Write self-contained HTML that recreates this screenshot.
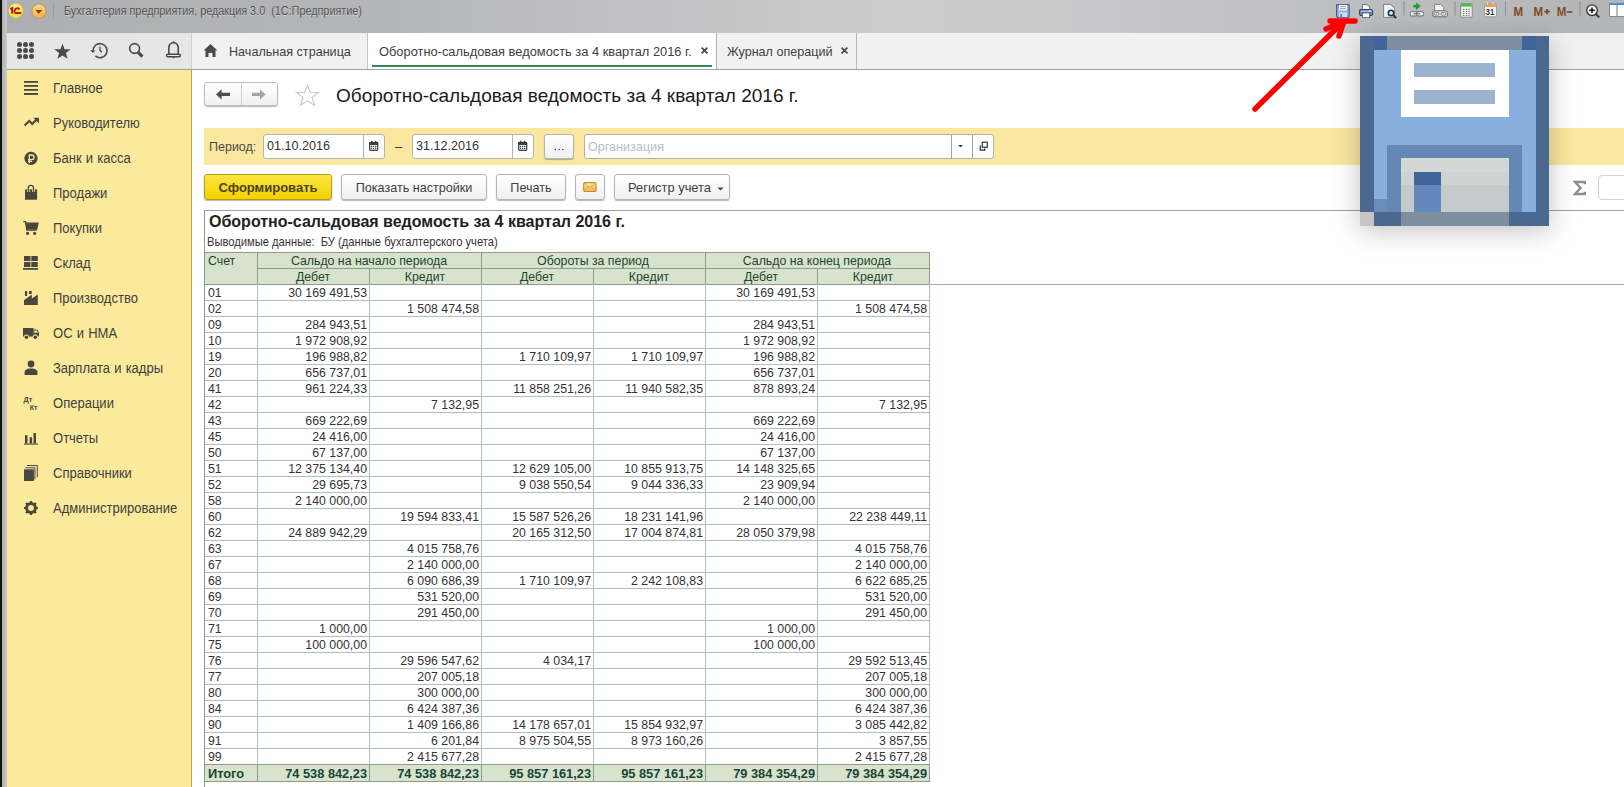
<!DOCTYPE html>
<html><head><meta charset="utf-8">
<style>
*{margin:0;padding:0;box-sizing:border-box}
html,body{width:1624px;height:787px;overflow:hidden;background:#fff;font-family:"Liberation Sans",sans-serif;color:#333}
.a{position:absolute}
svg{position:absolute;overflow:visible}
#titlebar{left:7px;top:0;width:1617px;height:33px;background:linear-gradient(90deg,#adaeb0 0%,#b6b7b9 25%,#cdcdce 55%,#c8c8ca 68%,#bdbec0 82%,#b4b5b7 100%)}
.sb{position:absolute;left:53px;font-size:14px;line-height:16px;color:#404040;word-spacing:.6px;white-space:nowrap;transform:scaleX(.93);transform-origin:0 0}
.tab{position:absolute;top:34px;height:36px;line-height:36px;font-size:12.6px;color:#404040;white-space:nowrap}
.btn{position:absolute;border:1px solid #b4b4b4;border-radius:3px;background:linear-gradient(#ffffff,#f0f0f0);box-shadow:0 1px 1px rgba(0,0,0,.28);font-size:12.6px;color:#404040;text-align:center;white-space:nowrap;line-height:23px}
.inp{position:absolute;background:#fff;border:1px solid #b4b4b4;border-radius:3px;font-size:12.6px;color:#333;line-height:23px;padding-left:3px;white-space:nowrap}
.th{position:absolute;font-size:13.4px;line-height:16px;color:#1e4436;white-space:nowrap;transform:scaleX(.92);transform-origin:50% 0}
.td{position:absolute;font-size:13.4px;line-height:16px;color:#333;white-space:nowrap;transform:scaleX(.92);transform-origin:100% 0}
.tt{position:absolute;font-size:13.4px;line-height:17px;color:#174636;font-weight:bold;white-space:nowrap;transform:scaleX(.955);transform-origin:100% 0}
.lft{transform-origin:0 0}
.ti{fill:#4a4a4a}
</style></head><body>
<!-- left window edge -->
<div class="a" style="left:0;top:0;width:2px;height:787px;background:#121212"></div>
<div class="a" style="left:2px;top:0;width:5px;height:787px;background:linear-gradient(90deg,#b0b0b0,#cacaca)"></div>

<!-- title bar -->
<div id="titlebar" class="a"></div>
<svg style="left:0;top:0" width="60" height="30">
  <defs>
   <radialGradient id="g1" cx="40%" cy="35%" r="70%"><stop offset="0" stop-color="#fff6a0"/><stop offset=".6" stop-color="#f8e84a"/><stop offset="1" stop-color="#eed820"/></radialGradient>
   <linearGradient id="g2" x1="0" y1="0" x2="0" y2="1"><stop offset="0" stop-color="#fcd78e"/><stop offset="1" stop-color="#f8b048"/></linearGradient>
  </defs>
  <circle cx="15.9" cy="10.9" r="7.3" fill="url(#g1)"/>
  <path d="M10.3 9.2 L12.2 8.1 V13.8" fill="none" stroke="#c4180e" stroke-width="2"/>
  <path d="M19.6 9.3 A3 2.8 0 0 0 14.6 12.2 M14.4 13 H21.3" fill="none" stroke="#c4180e" stroke-width="1.9"/>
  <circle cx="39" cy="11.1" r="7.1" fill="url(#g2)" stroke="#c59445" stroke-width=".9"/>
  <path d="M35.4 10.1 H42.3 L38.8 13.8Z" fill="#6a4412"/>
</svg>
<div class="a" style="left:53px;top:2px;width:1px;height:16px;background:#9e9e9e"></div>
<div class="a" style="left:64px;top:4px;font-size:12.3px;line-height:14px;color:#555;white-space:nowrap;transform:scaleX(.88);transform-origin:0 0;text-shadow:0 1px 0 rgba(255,255,255,.35)">Бухгалтерия предприятия, редакция 3.0&nbsp; (1С:Предприятие)</div>

<!-- title bar right icons -->
<svg style="left:1330px;top:0" width="294" height="22">
  <!-- floppy -->
  <rect x="6.6" y="4.6" width="12.6" height="12.6" rx=".8" fill="#90b2e2" stroke="#3d5d8c" stroke-width="1.1"/>
  <rect x="9" y="4.9" width="8" height="5.4" fill="#f6f8fb"/>
  <rect x="10" y="6.2" width="6" height=".9" fill="#8ea4c2"/><rect x="10" y="8.1" width="6" height=".9" fill="#8ea4c2"/>
  <rect x="9" y="12.4" width="8" height="4.6" fill="#d6dbe0"/><rect x="10.4" y="14" width="1.4" height="3" fill="#4a6a98"/>
  <!-- printer -->
  <path d="M32.4 4.6 H37.2 L39.6 7 V10.5 H32.4Z" fill="#f4f6f8" stroke="#4a4a4a" stroke-width=".7"/>
  <rect x="29.6" y="9.5" width="13" height="6" rx="1.6" fill="#6e8db8" stroke="#2c4466" stroke-width="1.1"/>
  <rect x="30.8" y="10.6" width="10.6" height="1.2" fill="#a9c0de"/>
  <rect x="38.6" y="10.4" width="1.1" height="1" fill="#fff"/><rect x="40.2" y="10.4" width="1.1" height="1" fill="#fff"/>
  <rect x="32.4" y="13" width="7.3" height="4.6" fill="#fff" stroke="#4a4a4a" stroke-width=".7"/>
  <!-- preview -->
  <path d="M53.6 4.4 H60.6 L64.3 8.2 V17.4 H53.6Z" fill="#f2f4f6" stroke="#6a6a6a" stroke-width=".8"/>
  <circle cx="61" cy="12.9" r="2.7" fill="#cfe6f8" stroke="#17384e" stroke-width="1.6"/>
  <path d="M63 15 L66.2 18" stroke="#17384e" stroke-width="2.1"/>
  <rect x="73.5" y="1" width="1" height="14.5" fill="#8e8e8e"/>
  <!-- link arrow -->
  <path d="M83.2 6.2 H88 M86 3.6 L89 6.2 L86 8.8" stroke="#2a9c2a" stroke-width="2.2" fill="none"/>
  <rect x="80.2" y="11.6" width="7.2" height="4.4" rx="1.6" fill="#ececec" stroke="#6a6a6a" stroke-width="1"/>
  <rect x="86.4" y="11.6" width="7.2" height="4.4" rx="1.6" fill="#ececec" stroke="#6a6a6a" stroke-width="1"/>
  <rect x="83.6" y="13.2" width="6.4" height="1.2" fill="#6a6a6a"/>
  <!-- print link -->
  <path d="M104.6 4.4 H110.6 L113.6 7.4 V11 H104.6Z" fill="#f3f3f3" stroke="#707070" stroke-width=".8"/>
  <rect x="102.8" y="10.8" width="14.6" height="6" rx="2" fill="#e8e8e8" stroke="#6a6a6a" stroke-width="1"/>
  <rect x="104.2" y="12.6" width="5" height="2.4" rx="1" fill="none" stroke="#6a6a6a" stroke-width=".8"/>
  <rect x="110.8" y="12.6" width="5" height="2.4" rx="1" fill="none" stroke="#6a6a6a" stroke-width=".8"/>
  <rect x="124.5" y="1" width="1" height="14.5" fill="#8e8e8e"/>
  <!-- green calendar -->
  <rect x="130.6" y="3.6" width="11.6" height="13.6" rx="1" fill="#eef0ee" stroke="#7a7a7a" stroke-width=".8"/>
  <rect x="131" y="3.6" width="10.8" height="3" fill="#48c048"/>
  <g fill="#4a4a4a"><circle cx="133.8" cy="9.3" r=".6"/><circle cx="136.4" cy="9.3" r=".6"/><circle cx="139" cy="9.3" r=".6"/><circle cx="133.8" cy="11.3" r=".6"/><circle cx="136.4" cy="11.3" r=".6"/><circle cx="139" cy="11.3" r=".6"/><circle cx="133.8" cy="13.3" r=".6"/><circle cx="136.4" cy="13.3" r=".6"/><circle cx="139" cy="13.3" r=".6"/><circle cx="133.8" cy="15.3" r=".6"/><circle cx="136.4" cy="15.3" r=".6"/><circle cx="139" cy="15.3" r=".6"/></g>
  <!-- orange calendar -->
  <rect x="154.6" y="3.6" width="11.8" height="13.2" rx="1.2" fill="#f5f5f5" stroke="#8a8a8a" stroke-width=".8"/>
  <rect x="155" y="3.4" width="11" height="3.6" rx="1" fill="#e3a05a"/>
  <rect x="157.2" y="2.6" width=".9" height="2" fill="#fff"/><rect x="162.6" y="2.6" width=".9" height="2" fill="#fff"/>
  <text x="155.6" y="15.2" font-family="Liberation Sans" font-size="8.4" font-weight="bold" fill="#3a3a3a" transform="translate(155.6,0) scale(.95,1) translate(-155.6,0)">31</text>
  <rect x="175" y="1" width="1" height="14.5" fill="#8e8e8e"/>
  <g fill="#7c4e22" font-family="Liberation Sans" font-weight="bold" font-size="13.4">
  <text x="0" y="15.8" transform="translate(183.6,0) scale(.86,1)">M</text>
  <text x="0" y="15.8" transform="translate(203.6,0) scale(.86,1)">M</text>
  <path d="M214.4 11.6 H219.8 M217.1 8.9 V14.3" stroke="#7c4e22" stroke-width="1.9"/>
  <text x="0" y="15.8" transform="translate(226.8,0) scale(.86,1)">M</text>
  <path d="M236.8 12 H242.2" stroke="#7c4e22" stroke-width="1.7"/>
  </g>
  <rect x="249.5" y="1" width="1" height="14.5" fill="#8e8e8e"/>
  <circle cx="262" cy="10.2" r="5.3" fill="#f4f4f4" stroke="#333" stroke-width="1.3"/>
  <path d="M259.2 10.2H264.8M262 7.4V13" stroke="#111" stroke-width="1.6"/>
  <path d="M265.8 14 L269.2 17.4" stroke="#333" stroke-width="2"/>
  <rect x="279.5" y="3.5" width="16" height="13" fill="#fff" stroke="#777" stroke-width=".8"/>
  <rect x="280" y="3" width="15" height="2" fill="#4a90d9"/>
  <rect x="286.5" y="5" width="1" height="11" fill="#777"/>
</svg>

<!-- toolbar + tabs -->
<div class="a" style="left:7px;top:33px;width:185px;height:36px;background:#e6e6e6"></div>
<div class="a" style="left:192px;top:33px;width:1432px;height:36px;background:#f1f1f1"></div>
<div class="a" style="left:7px;top:69px;width:1617px;height:1px;background:#a0a0a0"></div>
<div class="a" style="left:191px;top:33px;width:1px;height:36px;background:#cfcfcf"></div>
<svg style="left:0;top:33px" width="192" height="36">
  <g class="ti">
   <circle cx="19.5" cy="11.5" r="2.5"/><circle cx="25.5" cy="11.5" r="2.5"/><circle cx="31.5" cy="11.5" r="2.5"/>
   <circle cx="19.5" cy="17.5" r="2.5"/><circle cx="25.5" cy="17.5" r="2.5"/><circle cx="31.5" cy="17.5" r="2.5"/>
   <circle cx="19.5" cy="23.5" r="2.5"/><circle cx="25.5" cy="23.5" r="2.5"/><circle cx="31.5" cy="23.5" r="2.5"/>
   <path d="M62.5 10.5 L64.6 16.2 L70.7 16.3 L65.9 20 L67.6 25.8 L62.5 22.4 L57.4 25.8 L59.1 20 L54.3 16.3 L60.4 16.2Z"/>
  </g>
  <path d="M93.1 17.3 A7 7 0 1 1 95.3 22.8" fill="none" stroke="#4a4a4a" stroke-width="1.6"/>
  <path d="M90.2 17.2 H95.4 L92.9 20Z" fill="#4a4a4a"/>
  <path d="M99.9 13.6 V17.2 L101.8 19.3" fill="none" stroke="#4a4a4a" stroke-width="1.3"/>
  <circle cx="134.6" cy="15.5" r="4.9" fill="none" stroke="#4a4a4a" stroke-width="1.6"/>
  <path d="M138.2 19.4 L142.4 23.6" stroke="#4a4a4a" stroke-width="3.2"/>
  <path d="M168.8 21.5 V15.5 C168.8 11.6 170.8 9.8 173.5 9.8 C176.2 9.8 178.2 11.6 178.2 15.5 V21.5" fill="none" stroke="#4a4a4a" stroke-width="1.6"/>
  <rect x="166.6" y="21.2" width="13.8" height="2.6" rx="1.3" fill="none" stroke="#4a4a4a" stroke-width="1.5"/>
  <path d="M171.9 9.6 L173.5 7.9 L175.1 9.6Z" fill="#4a4a4a"/>
  <path d="M171.8 24.2 L173.5 25.5 L175.2 24.2Z" fill="#4a4a4a"/>
</svg>
<!-- tab 1 home -->
<div class="a" style="left:367px;top:33px;width:1px;height:36px;background:#c4c4c4"></div>
<svg style="left:200px;top:33px" width="24" height="36">
  <path d="M10.5 11 L17.5 17.5 H15.5 V24 H12.5 V20 H8.5 V24 H5.5 V17.5 H3.5Z" fill="#4a4a4a"/>
</svg>
<div class="tab" style="left:229px">Начальная страница</div>
<!-- active tab -->
<div class="a" style="left:368px;top:33px;width:348px;height:36px;background:#fff"></div>
<div class="a" style="left:372px;top:65px;width:340px;height:2px;background:#2e8b57"></div>
<div class="tab" style="left:379px;font-size:12.85px">Оборотно-сальдовая ведомость за 4 квартал 2016 г.</div>
<svg style="left:700px;top:46px" width="12" height="12"><path d="M1.6 1.6 L7.4 7.4 M7.4 1.6 L1.6 7.4" stroke="#484848" stroke-width="1.7"/></svg>
<div class="a" style="left:716px;top:33px;width:1px;height:36px;background:#b0b0b0"></div>
<div class="tab" style="left:727px">Журнал операций</div>
<svg style="left:840px;top:46px" width="12" height="12"><path d="M1.6 1.6 L7.4 7.4 M7.4 1.6 L1.6 7.4" stroke="#484848" stroke-width="1.7"/></svg>
<div class="a" style="left:856px;top:33px;width:1px;height:36px;background:#b8b8b8"></div>

<!-- sidebar -->
<div class="a" style="left:7px;top:70px;width:185px;height:717px;background:#fbea9b"></div>
<div class="a" style="left:189px;top:70px;width:2px;height:717px;background:#fdeb92"></div>
<div class="a" style="left:191px;top:70px;width:1px;height:717px;background:#b4a452"></div>
<svg style="left:0;top:0" width="60" height="530">
 <g fill="#48463e">
  <rect x="24" y="81" width="14" height="1.8"/><rect x="24" y="85" width="14" height="1.8"/><rect x="24" y="89" width="14" height="1.8"/><rect x="24" y="93" width="14" height="1.9"/>
  <path d="M24.6 125.6 L29.3 120.9 L32.1 124 L36.6 119.5" fill="none" stroke="#48463e" stroke-width="2.1"/>
  <path d="M33.4 117.8 H39 V123.4Z"/>
  <circle cx="31" cy="158.3" r="6.6"/>
  <path d="M29.3 163 V155 H31.8 A2.3 2.3 0 0 1 31.8 159.6 H28 M28 161.4 H32" fill="none" stroke="#fbea9b" stroke-width="1.3"/>
  <rect x="25" y="189.3" width="12.1" height="10.4"/>
  <path d="M28.3 192 V188 A2.6 2.6 0 0 1 33.5 188 V192" fill="none" stroke="#fbea9b" stroke-width="2.8"/>
  <path d="M28.3 192 V188 A2.6 2.6 0 0 1 33.5 188 V192" fill="none" stroke="#48463e" stroke-width="1.3"/>
  <path d="M23.2 221.6 H25.6 L26.8 230 H36.8" fill="none" stroke="#48463e" stroke-width="1.4"/>
  <path d="M25.4 222.6 H38.9 L37.2 229.4 H26.5Z"/>
  <circle cx="27.6" cy="233.3" r="1.6"/><circle cx="34.6" cy="233.3" r="1.6"/>
  <rect x="24" y="256" width="6.5" height="5"/><rect x="31.3" y="256" width="6.5" height="5"/>
  <rect x="24" y="262" width="6.5" height="5"/><rect x="31.3" y="262" width="6.5" height="5"/>
  <rect x="23" y="268" width="15" height="1.8"/>
  <rect x="25" y="291" width="2.1" height="5"/><rect x="28.9" y="291" width="2.8" height="3"/>
  <path d="M24 304.9 V300.2 L31.8 294.5 V298.5 L37.8 294.6 V304.9Z"/>
  <path d="M23 328 H33.6 V336.6 H23Z"/>
  <path d="M33.6 329.4 H37.2 L39 332.4 V336.6 H33.6Z"/>
  <path d="M34.4 330.4 H36.8 L38 332.8 H34.4Z" fill="#fbea9b"/>
  <circle cx="26.4" cy="337.2" r="2.6" fill="#fbea9b"/><circle cx="35.3" cy="337.2" r="2.6" fill="#fbea9b"/>
  <circle cx="26.4" cy="337.2" r="1.8"/><circle cx="35.3" cy="337.2" r="1.8"/>
  <circle cx="31" cy="364" r="3.4"/>
  <path d="M24.6 375 V372.5 C24.6 369.8 27 368.6 31 368.6 C35 368.6 37.5 369.8 37.5 372.5 V375Z"/>
  <text x="23.6" y="401.6" font-family="Liberation Sans" font-size="8" font-weight="bold" transform="translate(23.6,0) scale(.9,1) translate(-23.6,0)">Дт</text>
  <text x="29.8" y="410.2" font-family="Liberation Sans" font-size="7" font-weight="bold">Кт</text>
  <rect x="25" y="435.2" width="2.5" height="8.3"/><rect x="29.6" y="437.3" width="2.5" height="6.2"/><rect x="33.5" y="433" width="2.5" height="10.5"/>
  <rect x="24" y="443.5" width="14" height="1.1"/>
  <rect x="24" y="469.3" width="9.9" height="11.7"/>
  <path d="M25.5 467.8 H34.9 V479.5" fill="none" stroke="#48463e" stroke-width="1"/>
  <path d="M27 465.5 H37.3 V477.3" fill="none" stroke="#48463e" stroke-width="1"/>
  <circle cx="31" cy="508" r="4.6" fill="none" stroke="#48463e" stroke-width="2.6"/>
  <path d="M31 501 V515 M24 508 H38 M26 503 L36 513 M36 503 L26 513" stroke="#48463e" stroke-width="2.2"/>
  <circle cx="31" cy="508" r="2.9" fill="#fbea9b"/>
 </g>
</svg>
<div class="sb" style="top:80px">Главное</div>
<div class="sb" style="top:115px">Руководителю</div>
<div class="sb" style="top:150px">Банк и касса</div>
<div class="sb" style="top:185px">Продажи</div>
<div class="sb" style="top:220px">Покупки</div>
<div class="sb" style="top:255px">Склад</div>
<div class="sb" style="top:290px">Производство</div>
<div class="sb" style="top:325px">ОС и НМА</div>
<div class="sb" style="top:360px">Зарплата и кадры</div>
<div class="sb" style="top:395px">Операции</div>
<div class="sb" style="top:430px">Отчеты</div>
<div class="sb" style="top:465px">Справочники</div>
<div class="sb" style="top:500px">Администрирование</div>

<!-- content header -->
<div class="btn" style="left:204px;top:82px;width:74px;height:24px;border-color:#bdbdbd"></div>
<div class="a" style="left:241px;top:83px;width:1px;height:22px;background:#cfcfcf"></div>
<svg style="left:204px;top:82px" width="74" height="24">
  <path d="M12 12.4 L17.6 7.2 V10.8 H26 V14 H17.6 V17.6Z" fill="#4e4e4e"/>
  <path d="M61.6 12.4 L56 7.2 V10.8 H48 V14 H56 V17.6Z" fill="#a4a4a4"/>
</svg>
<svg style="left:294px;top:83px" width="28" height="26">

  <path d="M13.5 2 L16.3 9.4 L24.5 9.6 L18 14.5 L20.4 22.3 L13.5 17.8 L6.6 22.3 L9 14.5 L2.5 9.6 L10.7 9.4Z" fill="none" stroke="#c8c8c8" stroke-width="1.1"/>
</svg>
<div class="a" style="left:336px;top:85px;font-size:19px;line-height:22px;color:#1a1a1a;white-space:nowrap">Оборотно-сальдовая ведомость за 4 квартал 2016 г.</div>

<!-- yellow filter bar -->
<div class="a" style="left:204px;top:128px;width:1420px;height:37px;background:#fae8a0"></div>
<div class="a" style="left:209px;top:139px;font-size:12.5px;line-height:16px;color:#4a4a4a">Период:</div>
<div class="inp" style="left:263px;top:134px;width:122px;height:25px">01.10.2016</div>
<div class="a" style="left:363px;top:135px;width:1px;height:23px;background:#b4b4b4"></div>
<svg style="left:367px;top:140px" width="14" height="14"><rect x="2.7" y="2.4" width="8" height="8" rx="1" fill="none" stroke="#3e3e3e" stroke-width="1.2"/><rect x="2.2" y="1.9" width="9" height="3" rx="1" fill="#3e3e3e"/><circle cx="4.6" cy="1.5" r=".8" fill="#3e3e3e"/><circle cx="8.6" cy="1.5" r=".8" fill="#3e3e3e"/><g fill="#3e3e3e"><circle cx="4.5" cy="6.5" r=".75"/><circle cx="6.6" cy="6.5" r=".75"/><circle cx="8.6" cy="6.5" r=".75"/><circle cx="4.5" cy="8.5" r=".75"/><circle cx="6.6" cy="8.5" r=".75"/><circle cx="8.6" cy="8.5" r=".75"/></g></svg>
<div class="a" style="left:395px;top:139px;font-size:13px;line-height:16px;color:#333">–</div>
<div class="inp" style="left:412px;top:134px;width:122px;height:25px">31.12.2016</div>
<div class="a" style="left:512px;top:135px;width:1px;height:23px;background:#b4b4b4"></div>
<svg style="left:516px;top:140px" width="14" height="14"><rect x="2.7" y="2.4" width="8" height="8" rx="1" fill="none" stroke="#3e3e3e" stroke-width="1.2"/><rect x="2.2" y="1.9" width="9" height="3" rx="1" fill="#3e3e3e"/><circle cx="4.6" cy="1.5" r=".8" fill="#3e3e3e"/><circle cx="8.6" cy="1.5" r=".8" fill="#3e3e3e"/><g fill="#3e3e3e"><circle cx="4.5" cy="6.5" r=".75"/><circle cx="6.6" cy="6.5" r=".75"/><circle cx="8.6" cy="6.5" r=".75"/><circle cx="4.5" cy="8.5" r=".75"/><circle cx="6.6" cy="8.5" r=".75"/><circle cx="8.6" cy="8.5" r=".75"/></g></svg>
<div class="btn" style="left:544px;top:134px;width:30px;height:25px"></div>
<svg style="left:544px;top:134px" width="30" height="25"><g fill="#333"><circle cx="11.4" cy="15.6" r=".75"/><circle cx="15.1" cy="15.6" r=".75"/><circle cx="18.8" cy="15.6" r=".75"/></g></svg>
<div class="inp" style="left:584px;top:134px;width:410px;height:25px;line-height:24px;color:#bdbdbd;border-color:#b0b0b0">Организация</div>
<div class="a" style="left:951px;top:135px;width:1px;height:23px;background:#a4a4a4"></div>
<div class="a" style="left:972px;top:135px;width:1px;height:23px;background:#a4a4a4"></div>
<svg style="left:952px;top:135px" width="40" height="22">
  <path d="M6 10 H11 L8.5 12.5Z" fill="#444"/>
  <rect x="30.3" y="7.2" width="5" height="5" fill="none" stroke="#333" stroke-width="1.2"/>
  <path d="M28.3 10.5 V15.2 H32.8 V13.2" fill="none" stroke="#333" stroke-width="1.2"/>
</svg>

<!-- buttons row -->
<div class="btn" style="left:204px;top:174px;width:128px;height:26px;line-height:25px;background:linear-gradient(#fbe640,#f4d200);border-color:#b39b1c;color:#4a4218;font-weight:bold;font-size:13px">Сформировать</div>
<div class="btn" style="left:341px;top:174px;width:146px;height:26px;line-height:26px">Показать настройки</div>
<div class="btn" style="left:496px;top:174px;width:70px;height:26px;line-height:26px">Печать</div>
<div class="btn" style="left:575px;top:174px;width:30px;height:26px"></div>
<svg style="left:581px;top:180px" width="18" height="14"><defs><linearGradient id="me" x1="0" y1="0" x2="0" y2="1"><stop offset="0" stop-color="#fde7a0"/><stop offset="1" stop-color="#f2b45a"/></linearGradient></defs><rect x="2.7" y="2.6" width="12.4" height="8.9" rx="1.3" fill="url(#me)" stroke="#c98a2e" stroke-width="1.1"/><path d="M3.5 3.5 L8.9 7.6 L14.3 3.5 M3.5 11 L7.6 6.8 M14.3 11 L10.2 6.8" fill="none" stroke="#c98a2e" stroke-width=".6"/></svg>
<div class="btn" style="left:614px;top:174px;width:116px;height:26px;line-height:26px;text-align:left;padding-left:13px;font-size:12.9px">Регистр учета</div>
<svg style="left:717px;top:185.5px" width="8" height="6"><path d="M0.5 1.5 H6.5 L3.5 4.5Z" fill="#444"/></svg>
<svg style="left:1564px;top:170px" width="30" height="30"><path d="M20.8 14.2 V12 H11 L16.6 18 L11 24 H20.8 V21.8" fill="none" stroke="#8c8c8c" stroke-width="2.3" stroke-linejoin="miter"/></svg>
<div class="inp" style="left:1598px;top:175px;width:40px;height:25px;border:1.5px solid #d2d2d2;border-radius:4px"></div>

<!-- report frame -->
<div class="a" style="left:204px;top:210px;width:1420px;height:1px;background:#a0a0a0"></div>
<div class="a" style="left:209px;top:212px;font-size:16px;line-height:20px;color:#222;font-weight:bold;white-space:nowrap">Оборотно-сальдовая ведомость за 4 квартал 2016 г.</div>
<div class="a" style="left:207px;top:235px;font-size:11.9px;line-height:14px;color:#333;white-space:nowrap;transform:scaleX(.94);transform-origin:0 0">Выводимые данные:&nbsp; БУ (данные бухгалтерского учета)</div>
<div class="a" style="left:204px;top:252px;width:726px;height:33px;background:#d7e3cc"></div>
<div class="a" style="left:204px;top:764px;width:726px;height:17px;background:#d7e3cc"></div>
<div class="a" style="left:204px;top:252px;width:726px;height:1px;background:#8e9a8e"></div>
<div class="a" style="left:257px;top:268px;width:673px;height:1px;background:#8e9a8e"></div>
<div class="a" style="left:204px;top:284px;width:726px;height:1px;background:#8e9a8e"></div>
<div class="a" style="left:930px;top:284px;width:695px;height:1px;background:#a9a9a9"></div>
<div class="a" style="left:204px;top:300px;width:726px;height:1px;background:#adc0bc"></div>
<div class="a" style="left:204px;top:316px;width:726px;height:1px;background:#adc0bc"></div>
<div class="a" style="left:204px;top:332px;width:726px;height:1px;background:#adc0bc"></div>
<div class="a" style="left:204px;top:348px;width:726px;height:1px;background:#adc0bc"></div>
<div class="a" style="left:204px;top:364px;width:726px;height:1px;background:#adc0bc"></div>
<div class="a" style="left:204px;top:380px;width:726px;height:1px;background:#adc0bc"></div>
<div class="a" style="left:204px;top:396px;width:726px;height:1px;background:#adc0bc"></div>
<div class="a" style="left:204px;top:412px;width:726px;height:1px;background:#adc0bc"></div>
<div class="a" style="left:204px;top:428px;width:726px;height:1px;background:#adc0bc"></div>
<div class="a" style="left:204px;top:444px;width:726px;height:1px;background:#adc0bc"></div>
<div class="a" style="left:204px;top:460px;width:726px;height:1px;background:#adc0bc"></div>
<div class="a" style="left:204px;top:476px;width:726px;height:1px;background:#adc0bc"></div>
<div class="a" style="left:204px;top:492px;width:726px;height:1px;background:#adc0bc"></div>
<div class="a" style="left:204px;top:508px;width:726px;height:1px;background:#adc0bc"></div>
<div class="a" style="left:204px;top:524px;width:726px;height:1px;background:#adc0bc"></div>
<div class="a" style="left:204px;top:540px;width:726px;height:1px;background:#adc0bc"></div>
<div class="a" style="left:204px;top:556px;width:726px;height:1px;background:#adc0bc"></div>
<div class="a" style="left:204px;top:572px;width:726px;height:1px;background:#adc0bc"></div>
<div class="a" style="left:204px;top:588px;width:726px;height:1px;background:#adc0bc"></div>
<div class="a" style="left:204px;top:604px;width:726px;height:1px;background:#adc0bc"></div>
<div class="a" style="left:204px;top:620px;width:726px;height:1px;background:#adc0bc"></div>
<div class="a" style="left:204px;top:636px;width:726px;height:1px;background:#adc0bc"></div>
<div class="a" style="left:204px;top:652px;width:726px;height:1px;background:#adc0bc"></div>
<div class="a" style="left:204px;top:668px;width:726px;height:1px;background:#adc0bc"></div>
<div class="a" style="left:204px;top:684px;width:726px;height:1px;background:#adc0bc"></div>
<div class="a" style="left:204px;top:700px;width:726px;height:1px;background:#adc0bc"></div>
<div class="a" style="left:204px;top:716px;width:726px;height:1px;background:#adc0bc"></div>
<div class="a" style="left:204px;top:732px;width:726px;height:1px;background:#adc0bc"></div>
<div class="a" style="left:204px;top:748px;width:726px;height:1px;background:#adc0bc"></div>
<div class="a" style="left:204px;top:764px;width:726px;height:1px;background:#8e9a8e"></div>
<div class="a" style="left:204px;top:781px;width:726px;height:1px;background:#8e9a8e"></div>
<div class="a" style="left:204px;top:210px;width:1px;height:578px;background:#8e9a8e"></div>
<div class="a" style="left:257px;top:252px;width:1px;height:33px;background:#8e9a8e"></div>
<div class="a" style="left:257px;top:284px;width:1px;height:481px;background:#adc0bc"></div>
<div class="a" style="left:257px;top:764px;width:1px;height:18px;background:#8e9a8e"></div>
<div class="a" style="left:369px;top:268px;width:1px;height:17px;background:#8e9a8e"></div>
<div class="a" style="left:369px;top:284px;width:1px;height:481px;background:#adc0bc"></div>
<div class="a" style="left:369px;top:764px;width:1px;height:18px;background:#8e9a8e"></div>
<div class="a" style="left:481px;top:252px;width:1px;height:33px;background:#8e9a8e"></div>
<div class="a" style="left:481px;top:284px;width:1px;height:481px;background:#adc0bc"></div>
<div class="a" style="left:481px;top:764px;width:1px;height:18px;background:#8e9a8e"></div>
<div class="a" style="left:593px;top:268px;width:1px;height:17px;background:#8e9a8e"></div>
<div class="a" style="left:593px;top:284px;width:1px;height:481px;background:#adc0bc"></div>
<div class="a" style="left:593px;top:764px;width:1px;height:18px;background:#8e9a8e"></div>
<div class="a" style="left:705px;top:252px;width:1px;height:33px;background:#8e9a8e"></div>
<div class="a" style="left:705px;top:284px;width:1px;height:481px;background:#adc0bc"></div>
<div class="a" style="left:705px;top:764px;width:1px;height:18px;background:#8e9a8e"></div>
<div class="a" style="left:817px;top:268px;width:1px;height:17px;background:#8e9a8e"></div>
<div class="a" style="left:817px;top:284px;width:1px;height:481px;background:#adc0bc"></div>
<div class="a" style="left:817px;top:764px;width:1px;height:18px;background:#8e9a8e"></div>
<div class="a" style="left:929px;top:252px;width:1px;height:33px;background:#8e9a8e"></div>
<div class="a" style="left:929px;top:284px;width:1px;height:481px;background:#adc0bc"></div>
<div class="a" style="left:929px;top:764px;width:1px;height:18px;background:#8e9a8e"></div>
<div class="th lft" style="left:208px;top:253px">Счет</div>
<div class="th" style="left:257px;top:253px;width:224px;text-align:center">Сальдо на начало периода</div>
<div class="th" style="left:257px;top:269px;width:112px;text-align:center">Дебет</div>
<div class="th" style="left:369px;top:269px;width:112px;text-align:center">Кредит</div>
<div class="th" style="left:481px;top:253px;width:224px;text-align:center">Обороты за период</div>
<div class="th" style="left:481px;top:269px;width:112px;text-align:center">Дебет</div>
<div class="th" style="left:593px;top:269px;width:112px;text-align:center">Кредит</div>
<div class="th" style="left:705px;top:253px;width:224px;text-align:center">Сальдо на конец периода</div>
<div class="th" style="left:705px;top:269px;width:112px;text-align:center">Дебет</div>
<div class="th" style="left:817px;top:269px;width:112px;text-align:center">Кредит</div>
<div class="td lft" style="left:208px;top:285px">01</div>
<div class="td" style="left:257px;top:285px;width:110px;text-align:right">30 169 491,53</div>
<div class="td" style="left:705px;top:285px;width:110px;text-align:right">30 169 491,53</div>
<div class="td lft" style="left:208px;top:301px">02</div>
<div class="td" style="left:369px;top:301px;width:110px;text-align:right">1 508 474,58</div>
<div class="td" style="left:817px;top:301px;width:110px;text-align:right">1 508 474,58</div>
<div class="td lft" style="left:208px;top:317px">09</div>
<div class="td" style="left:257px;top:317px;width:110px;text-align:right">284 943,51</div>
<div class="td" style="left:705px;top:317px;width:110px;text-align:right">284 943,51</div>
<div class="td lft" style="left:208px;top:333px">10</div>
<div class="td" style="left:257px;top:333px;width:110px;text-align:right">1 972 908,92</div>
<div class="td" style="left:705px;top:333px;width:110px;text-align:right">1 972 908,92</div>
<div class="td lft" style="left:208px;top:349px">19</div>
<div class="td" style="left:257px;top:349px;width:110px;text-align:right">196 988,82</div>
<div class="td" style="left:481px;top:349px;width:110px;text-align:right">1 710 109,97</div>
<div class="td" style="left:593px;top:349px;width:110px;text-align:right">1 710 109,97</div>
<div class="td" style="left:705px;top:349px;width:110px;text-align:right">196 988,82</div>
<div class="td lft" style="left:208px;top:365px">20</div>
<div class="td" style="left:257px;top:365px;width:110px;text-align:right">656 737,01</div>
<div class="td" style="left:705px;top:365px;width:110px;text-align:right">656 737,01</div>
<div class="td lft" style="left:208px;top:381px">41</div>
<div class="td" style="left:257px;top:381px;width:110px;text-align:right">961 224,33</div>
<div class="td" style="left:481px;top:381px;width:110px;text-align:right">11 858 251,26</div>
<div class="td" style="left:593px;top:381px;width:110px;text-align:right">11 940 582,35</div>
<div class="td" style="left:705px;top:381px;width:110px;text-align:right">878 893,24</div>
<div class="td lft" style="left:208px;top:397px">42</div>
<div class="td" style="left:369px;top:397px;width:110px;text-align:right">7 132,95</div>
<div class="td" style="left:817px;top:397px;width:110px;text-align:right">7 132,95</div>
<div class="td lft" style="left:208px;top:413px">43</div>
<div class="td" style="left:257px;top:413px;width:110px;text-align:right">669 222,69</div>
<div class="td" style="left:705px;top:413px;width:110px;text-align:right">669 222,69</div>
<div class="td lft" style="left:208px;top:429px">45</div>
<div class="td" style="left:257px;top:429px;width:110px;text-align:right">24 416,00</div>
<div class="td" style="left:705px;top:429px;width:110px;text-align:right">24 416,00</div>
<div class="td lft" style="left:208px;top:445px">50</div>
<div class="td" style="left:257px;top:445px;width:110px;text-align:right">67 137,00</div>
<div class="td" style="left:705px;top:445px;width:110px;text-align:right">67 137,00</div>
<div class="td lft" style="left:208px;top:461px">51</div>
<div class="td" style="left:257px;top:461px;width:110px;text-align:right">12 375 134,40</div>
<div class="td" style="left:481px;top:461px;width:110px;text-align:right">12 629 105,00</div>
<div class="td" style="left:593px;top:461px;width:110px;text-align:right">10 855 913,75</div>
<div class="td" style="left:705px;top:461px;width:110px;text-align:right">14 148 325,65</div>
<div class="td lft" style="left:208px;top:477px">52</div>
<div class="td" style="left:257px;top:477px;width:110px;text-align:right">29 695,73</div>
<div class="td" style="left:481px;top:477px;width:110px;text-align:right">9 038 550,54</div>
<div class="td" style="left:593px;top:477px;width:110px;text-align:right">9 044 336,33</div>
<div class="td" style="left:705px;top:477px;width:110px;text-align:right">23 909,94</div>
<div class="td lft" style="left:208px;top:493px">58</div>
<div class="td" style="left:257px;top:493px;width:110px;text-align:right">2 140 000,00</div>
<div class="td" style="left:705px;top:493px;width:110px;text-align:right">2 140 000,00</div>
<div class="td lft" style="left:208px;top:509px">60</div>
<div class="td" style="left:369px;top:509px;width:110px;text-align:right">19 594 833,41</div>
<div class="td" style="left:481px;top:509px;width:110px;text-align:right">15 587 526,26</div>
<div class="td" style="left:593px;top:509px;width:110px;text-align:right">18 231 141,96</div>
<div class="td" style="left:817px;top:509px;width:110px;text-align:right">22 238 449,11</div>
<div class="td lft" style="left:208px;top:525px">62</div>
<div class="td" style="left:257px;top:525px;width:110px;text-align:right">24 889 942,29</div>
<div class="td" style="left:481px;top:525px;width:110px;text-align:right">20 165 312,50</div>
<div class="td" style="left:593px;top:525px;width:110px;text-align:right">17 004 874,81</div>
<div class="td" style="left:705px;top:525px;width:110px;text-align:right">28 050 379,98</div>
<div class="td lft" style="left:208px;top:541px">63</div>
<div class="td" style="left:369px;top:541px;width:110px;text-align:right">4 015 758,76</div>
<div class="td" style="left:817px;top:541px;width:110px;text-align:right">4 015 758,76</div>
<div class="td lft" style="left:208px;top:557px">67</div>
<div class="td" style="left:369px;top:557px;width:110px;text-align:right">2 140 000,00</div>
<div class="td" style="left:817px;top:557px;width:110px;text-align:right">2 140 000,00</div>
<div class="td lft" style="left:208px;top:573px">68</div>
<div class="td" style="left:369px;top:573px;width:110px;text-align:right">6 090 686,39</div>
<div class="td" style="left:481px;top:573px;width:110px;text-align:right">1 710 109,97</div>
<div class="td" style="left:593px;top:573px;width:110px;text-align:right">2 242 108,83</div>
<div class="td" style="left:817px;top:573px;width:110px;text-align:right">6 622 685,25</div>
<div class="td lft" style="left:208px;top:589px">69</div>
<div class="td" style="left:369px;top:589px;width:110px;text-align:right">531 520,00</div>
<div class="td" style="left:817px;top:589px;width:110px;text-align:right">531 520,00</div>
<div class="td lft" style="left:208px;top:605px">70</div>
<div class="td" style="left:369px;top:605px;width:110px;text-align:right">291 450,00</div>
<div class="td" style="left:817px;top:605px;width:110px;text-align:right">291 450,00</div>
<div class="td lft" style="left:208px;top:621px">71</div>
<div class="td" style="left:257px;top:621px;width:110px;text-align:right">1 000,00</div>
<div class="td" style="left:705px;top:621px;width:110px;text-align:right">1 000,00</div>
<div class="td lft" style="left:208px;top:637px">75</div>
<div class="td" style="left:257px;top:637px;width:110px;text-align:right">100 000,00</div>
<div class="td" style="left:705px;top:637px;width:110px;text-align:right">100 000,00</div>
<div class="td lft" style="left:208px;top:653px">76</div>
<div class="td" style="left:369px;top:653px;width:110px;text-align:right">29 596 547,62</div>
<div class="td" style="left:481px;top:653px;width:110px;text-align:right">4 034,17</div>
<div class="td" style="left:817px;top:653px;width:110px;text-align:right">29 592 513,45</div>
<div class="td lft" style="left:208px;top:669px">77</div>
<div class="td" style="left:369px;top:669px;width:110px;text-align:right">207 005,18</div>
<div class="td" style="left:817px;top:669px;width:110px;text-align:right">207 005,18</div>
<div class="td lft" style="left:208px;top:685px">80</div>
<div class="td" style="left:369px;top:685px;width:110px;text-align:right">300 000,00</div>
<div class="td" style="left:817px;top:685px;width:110px;text-align:right">300 000,00</div>
<div class="td lft" style="left:208px;top:701px">84</div>
<div class="td" style="left:369px;top:701px;width:110px;text-align:right">6 424 387,36</div>
<div class="td" style="left:817px;top:701px;width:110px;text-align:right">6 424 387,36</div>
<div class="td lft" style="left:208px;top:717px">90</div>
<div class="td" style="left:369px;top:717px;width:110px;text-align:right">1 409 166,86</div>
<div class="td" style="left:481px;top:717px;width:110px;text-align:right">14 178 657,01</div>
<div class="td" style="left:593px;top:717px;width:110px;text-align:right">15 854 932,97</div>
<div class="td" style="left:817px;top:717px;width:110px;text-align:right">3 085 442,82</div>
<div class="td lft" style="left:208px;top:733px">91</div>
<div class="td" style="left:369px;top:733px;width:110px;text-align:right">6 201,84</div>
<div class="td" style="left:481px;top:733px;width:110px;text-align:right">8 975 504,55</div>
<div class="td" style="left:593px;top:733px;width:110px;text-align:right">8 973 160,26</div>
<div class="td" style="left:817px;top:733px;width:110px;text-align:right">3 857,55</div>
<div class="td lft" style="left:208px;top:749px">99</div>
<div class="td" style="left:369px;top:749px;width:110px;text-align:right">2 415 677,28</div>
<div class="td" style="left:817px;top:749px;width:110px;text-align:right">2 415 677,28</div>
<div class="tt lft" style="left:208px;top:765px">Итого</div>
<div class="tt" style="left:257px;top:765px;width:110px;text-align:right">74 538 842,23</div>
<div class="tt" style="left:369px;top:765px;width:110px;text-align:right">74 538 842,23</div>
<div class="tt" style="left:481px;top:765px;width:110px;text-align:right">95 857 161,23</div>
<div class="tt" style="left:593px;top:765px;width:110px;text-align:right">95 857 161,23</div>
<div class="tt" style="left:705px;top:765px;width:110px;text-align:right">79 384 354,29</div>
<div class="tt" style="left:817px;top:765px;width:110px;text-align:right">79 384 354,29</div>

<!-- red arrow -->
<svg style="left:1240px;top:10px" width="130" height="110">
  <path d="M15 99 L103 12" stroke="#ff0000" stroke-width="5.5" stroke-linecap="round" fill="none"/>
  <path d="M90 11 H115" stroke="#ff0000" stroke-width="5.5" stroke-linecap="round"/>
  <path d="M86 19 L104 11 L99 26" stroke="#ff0000" stroke-width="5.5" stroke-linecap="round" stroke-linejoin="round" fill="none"/>
</svg>

<!-- big floppy -->
<div class="a" style="left:1360px;top:36px;width:189px;height:190px;box-shadow:0 4px 26px rgba(0,0,0,.25)"></div>
<svg style="left:1360px;top:36px" width="189" height="190" viewBox="0 0 14 14" preserveAspectRatio="none" shape-rendering="crispEdges">
  <rect x="0" y="0" width="14" height="14" fill="#4a6890"/>
  <rect x="1" y="0" width="1" height="1" fill="#41659a"/>
  <rect x="2" y="0" width="10" height="1" fill="#7e8e9e"/>
  <rect x="12" y="0" width="1" height="1" fill="#41659a"/>
  <rect x="1" y="1" width="12" height="12" fill="#88afdd"/>
  <rect x="3" y="1" width="8" height="5" fill="#ffffff"/>
  <rect x="4" y="2" width="6" height="1" fill="#9cb3cf"/>
  <rect x="4" y="4" width="6" height="1" fill="#9cb3cf"/>
  <rect x="2" y="8" width="10" height="5" fill="#6587b4"/>
  <rect x="3" y="9" width="8" height="4" fill="#c3ccca"/>
  <rect x="3" y="9" width="8" height="1" fill="#d3d7d6"/>
  <rect x="3" y="10" width="8" height="1" fill="#ced2d1"/>
  <rect x="4" y="10" width="2" height="1" fill="#41669a"/>
  <rect x="4" y="11" width="2" height="2" fill="#6488bc"/>
  <rect x="1" y="12" width="1" height="1" fill="#6a8cb8"/>
  <rect x="0" y="13" width="1" height="1" fill="#c6c6c6"/>
  <rect x="1" y="13" width="2" height="1" fill="#4a6890"/>
  <rect x="3" y="13" width="8" height="1" fill="#7e8e9e"/>
  <rect x="11" y="13" width="3" height="1" fill="#4a6890"/>
</svg>
</body></html>
